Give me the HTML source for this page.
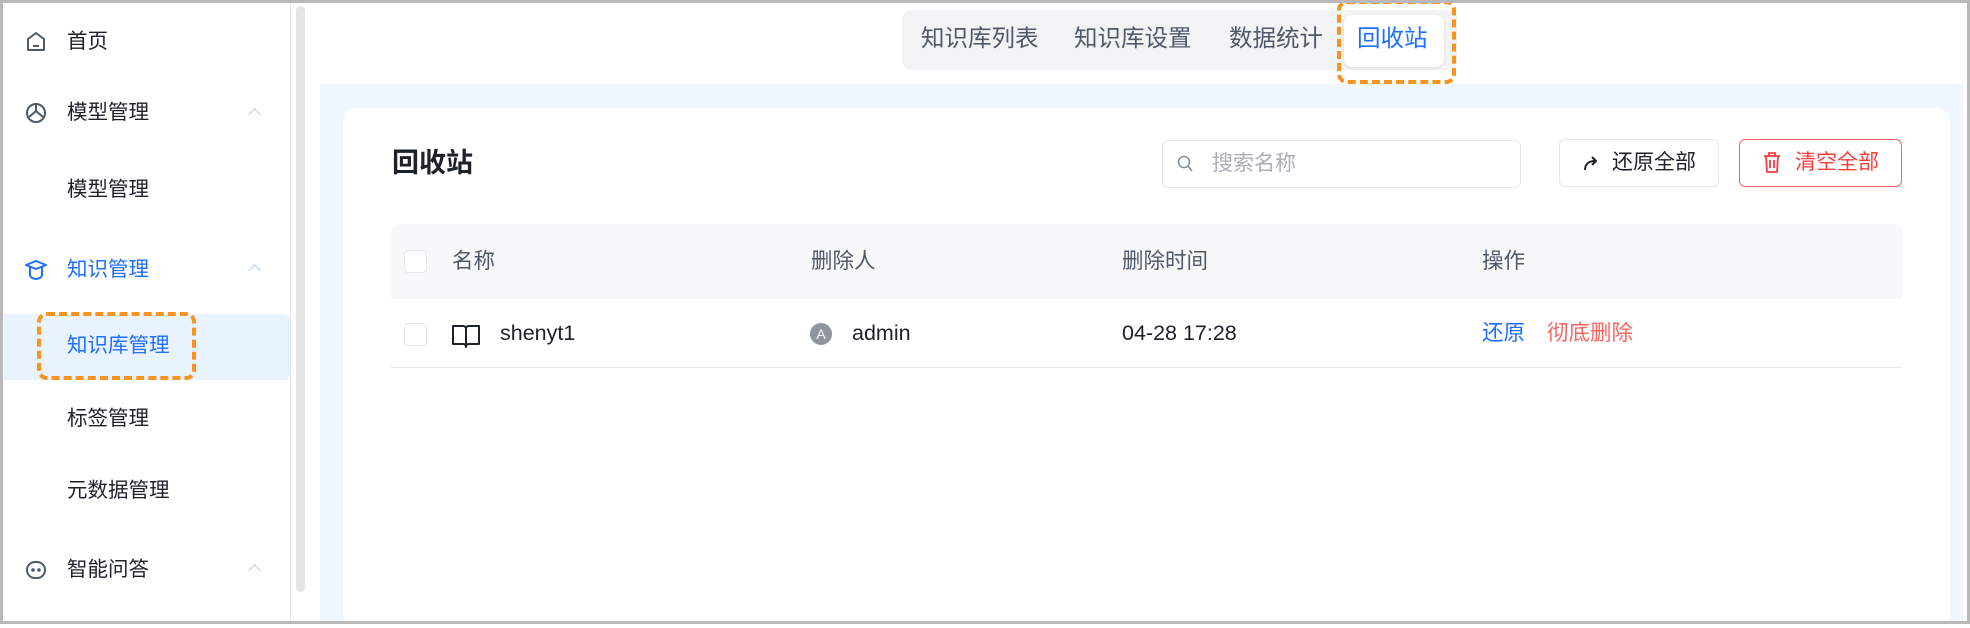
<!DOCTYPE html>
<html><head><meta charset="utf-8"><style>
*{margin:0;padding:0;box-sizing:border-box}
body{width:1970px;height:624px;overflow:hidden;background:#fff;font-family:"Liberation Sans","Noto Sans CJK SC",sans-serif;position:relative;color:#1d2129}
.abs{position:absolute}
.frame{left:0;top:0;width:1970px;height:624px;border:3px solid #b9b9b9;z-index:50;pointer-events:none}
.side{left:0;top:0;width:291px;height:624px;border-right:1px solid #e5e6eb}
.mi{position:absolute;left:67px;font-size:20.5px;line-height:24px;color:#1d2129;white-space:nowrap}
.chev{position:absolute;left:250px;width:9px;height:9px;border-left:1.5px solid #c9cdd4;border-top:1.5px solid #c9cdd4;transform:rotate(45deg)}
.ic{position:absolute;left:25px}
.tabs{left:902px;top:10px;width:555px;height:60px;background:#f2f3f5;border-radius:10px}
.tab{position:absolute;top:23px;font-size:23.5px;line-height:30px;color:#4e5969;white-space:nowrap}
.th{position:absolute;top:247px;font-size:21.5px;line-height:28px;color:#4e5969;white-space:nowrap}
.td{position:absolute;top:319px;font-size:21.5px;line-height:28px;color:#1d2129;white-space:nowrap}
.cb{position:absolute;width:23px;height:23px;border:1.5px solid #e5e6eb;border-radius:4px;background:#fff}
.dash{border:4px dashed #f7931e;border-radius:10px}
</style></head><body>
<div class="abs frame"></div>
<div class="abs side"></div>
<div class="abs" style="left:296px;top:6px;width:9px;height:586px;background:#e4e4e4;border-radius:5px"></div>

<svg class="ic" style="top:31px" width="22" height="22" viewBox="0 0 22 22" fill="none" stroke="#4e5969" stroke-width="2"><path d="M3 8 L11 2 L19 8 V19 H3 Z" stroke-linejoin="round"/><path d="M8 15h6"/></svg>
<div class="mi" style="top:30px">首页</div>
<svg class="ic" style="top:102px" width="22" height="22" viewBox="0 0 22 22" fill="none" stroke="#4e5969" stroke-width="2"><circle cx="11" cy="11" r="9"/><path d="M11 2v7M11 9l7 6M11 9l-7 6"/></svg>
<div class="mi" style="top:101px">模型管理</div>
<div class="chev" style="top:110px"></div>
<div class="mi" style="top:178px">模型管理</div>
<svg class="ic" style="top:259px" width="22" height="22" viewBox="0 0 22 22" fill="none" stroke="#1e6fff" stroke-width="2"><path d="M11 2 L21 6 L11 10 L1 6 Z" stroke-linejoin="round"/><path d="M5 8v8c0 2 3 4 6 4s6-2 6-4V8"/></svg>
<div class="mi" style="top:258px;color:#1e6fff">知识管理</div>
<div class="chev" style="top:266px;border-color:#aecbff"></div>
<div class="abs" style="left:4px;top:314px;width:286px;height:66px;background:#e8f3ff;border-radius:0 6px 6px 0"></div>
<div class="mi" style="top:334px;color:#1e6fff">知识库管理</div>
<div class="abs dash" style="left:37px;top:312px;width:159px;height:68px"></div>
<div class="mi" style="top:407px">标签管理</div>
<div class="mi" style="top:479px">元数据管理</div>
<svg class="ic" style="top:559px" width="22" height="22" viewBox="0 0 22 22" fill="none" stroke="#4e5969" stroke-width="2"><rect x="2" y="3" width="18" height="16" rx="8"/><circle cx="8" cy="11" r=".8" fill="#4e5969"/><circle cx="14" cy="11" r=".8" fill="#4e5969"/></svg>
<div class="mi" style="top:558px">智能问答</div>
<div class="chev" style="top:566px"></div>

<div class="abs tabs"></div>
<div class="abs tab" style="left:921px">知识库列表</div>
<div class="abs tab" style="left:1074px">知识库设置</div>
<div class="abs tab" style="left:1229px">数据统计</div>
<div class="abs" style="left:1344px;top:15px;width:100px;height:52px;background:#fff;border-radius:8px;box-shadow:0 1px 3px rgba(0,0,0,.1)"></div>
<div class="abs tab" style="left:1357px;color:#1e6fff">回收站</div>
<div class="abs dash" style="left:1337px;top:0px;width:119px;height:84px"></div>

<div class="abs" style="left:320px;top:84px;width:1643px;height:540px;background:#f0f6fd"></div>
<div class="abs" style="left:343px;top:108px;width:1607px;height:520px;background:#fff;border-radius:14px"></div>
<div class="abs" style="left:392px;top:146px;font-size:27px;font-weight:bold;line-height:34px">回收站</div>

<div class="abs" style="left:1162px;top:140px;width:359px;height:48px;border:1.5px solid #e5e6eb;border-radius:6px"></div>
<svg class="abs" style="left:1177px;top:155px" width="16" height="18" viewBox="0 0 16 18" fill="none" stroke="#86909c" stroke-width="1.6"><circle cx="7" cy="7" r="5.5"/><path d="M11 11l4 5"/></svg>
<div class="abs" style="left:1212px;top:150px;font-size:21px;line-height:28px;color:#a9aeb8">搜索名称</div>

<div class="abs" style="left:1559px;top:139px;width:160px;height:48px;border:1.5px solid #e5e6eb;border-radius:6px;background:#fff"></div>
<svg class="abs" style="left:1583px;top:155px" width="18" height="16" viewBox="0 0 18 16" fill="none" stroke="#1d2129" stroke-width="2"><path d="M2 15c0-6 4-9 10-9M9 2l4 4-4 4" stroke-linejoin="round"/></svg>
<div class="abs" style="left:1612px;top:149px;font-size:21px;line-height:28px">还原全部</div>

<div class="abs" style="left:1739px;top:139px;width:163px;height:48px;border:1.5px solid #f76560;border-radius:6px"></div>
<svg class="abs" style="left:1763px;top:152px" width="18" height="21" viewBox="0 0 18 21" fill="none" stroke="#f53f3f" stroke-width="1.8"><path d="M1 4h16M6 4V1h6v3M3 4l1 16h10l1-16M7 8v8M11 8v8"/></svg>
<div class="abs" style="left:1795px;top:149px;font-size:21px;line-height:28px;color:#f53f3f">清空全部</div>

<div class="abs" style="left:391px;top:224px;width:1511px;height:75px;background:#f7f8fa;border-radius:8px 8px 0 0"></div>
<div class="abs" style="left:391px;top:367px;width:1511px;height:1px;background:#e5e6eb"></div>
<div class="cb" style="left:404px;top:250px"></div>
<div class="th" style="left:452px">名称</div>
<div class="th" style="left:811px">删除人</div>
<div class="th" style="left:1122px">删除时间</div>
<div class="th" style="left:1482px">操作</div>

<div class="cb" style="left:404px;top:323px"></div>
<svg class="abs" style="left:451px;top:323px" width="30" height="26" viewBox="0 0 30 26" fill="none" stroke="#1d2129" stroke-width="2"><path d="M2 3h10c2 0 3 1 3 3v18c0-2-1-3-3-3H2Z M28 3H18c-2 0-3 1-3 3v18c0-2 1-3 3-3h10Z" stroke-linejoin="round"/></svg>
<div class="td" style="left:500px">shenyt1</div>
<div class="abs" style="left:810px;top:323px;width:22px;height:22px;border-radius:50%;background:#8f959e;color:#fff;font-size:14px;line-height:22px;text-align:center">A</div>
<div class="td" style="left:852px">admin</div>
<div class="td" style="left:1122px">04-28 17:28</div>
<div class="td" style="left:1482px;color:#1e6fff">还原</div>
<div class="td" style="left:1547px;color:#f76560">彻底删除</div>
</body></html>
